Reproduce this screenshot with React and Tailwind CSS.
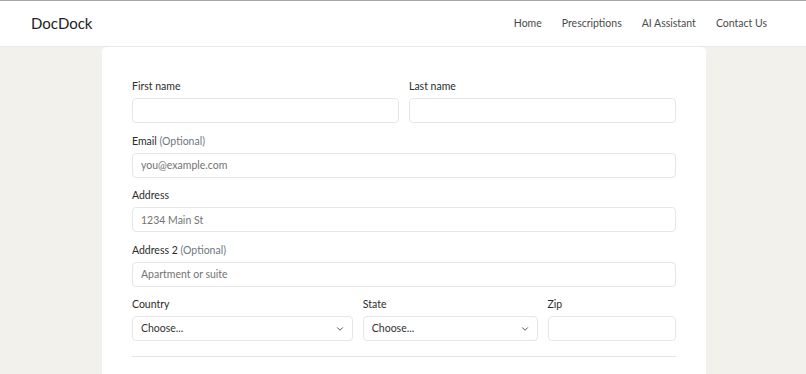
import { ChevronDown } from 'lucide-react'

const font = { fontFamily: 'Lato, "Noto Sans", sans-serif' }

function Label({ children, optional }) {
  return (
    <label className="mb-[4px] block text-[10.5px] leading-[16px] text-[#2b2b2b]">
      {children}
      {optional ? <span className="text-[#707780]"> (Optional)</span> : null}
    </label>
  )
}

function Input({ placeholder }) {
  return (
    <input
      placeholder={placeholder}
      className="block h-[25px] w-full rounded-[4px] border border-[#e6e6e6] bg-white px-[8px] text-[10.5px] text-[#333] outline-none placeholder:text-[#737373]"
    />
  )
}

function Select() {
  return (
    <div className="flex h-[25px] w-full items-center justify-between rounded-[4px] border border-[#e6e6e6] bg-white pl-[8px] pr-[7px] text-[10.5px] text-[#333]">
      <span>Choose...</span>
      <ChevronDown size={10} strokeWidth={2.25} className="text-[#444]" />
    </div>
  )
}

export default function App() {
  return (
    <div className="min-h-[374px] bg-[#f2f1ec]" style={font}>
      <nav className="flex h-[47px] items-center justify-between border-t border-b border-t-[#a6a6a6] border-b-[#e9e9e9] bg-white pl-[31px] pr-[39px]">
        <span className="text-[15px] text-[#222]">DocDock</span>
        <ul className="flex gap-[20px] text-[10.5px] text-[#4a4a4a]">
          <li>Home</li>
          <li>Prescriptions</li>
          <li>AI Assistant</li>
          <li>Contact Us</li>
        </ul>
      </nav>
      <main className="ml-[102px] w-[604px] rounded-t-[5px] bg-white px-[30px] pt-[31px] pb-[20px]">
        <div className="flex flex-col gap-[9.5px]">
          <div className="grid grid-cols-2 gap-[10px]">
            <div>
              <Label>First name</Label>
              <Input />
            </div>
            <div>
              <Label>Last name</Label>
              <Input />
            </div>
          </div>
          <div>
            <Label optional>Email</Label>
            <Input placeholder="you@example.com" />
          </div>
          <div>
            <Label>Address</Label>
            <Input placeholder="1234 Main St" />
          </div>
          <div>
            <Label optional>Address 2</Label>
            <Input placeholder="Apartment or suite" />
          </div>
          <div className="grid grid-cols-12 gap-[10px]">
            <div className="col-span-5">
              <Label>Country</Label>
              <Select />
            </div>
            <div className="col-span-4">
              <Label>State</Label>
              <Select />
            </div>
            <div className="col-span-3">
              <Label>Zip</Label>
              <Input />
            </div>
          </div>
        </div>
        <hr className="mt-[15px] border-[#e3e3e3]" />
      </main>
    </div>
  )
}
